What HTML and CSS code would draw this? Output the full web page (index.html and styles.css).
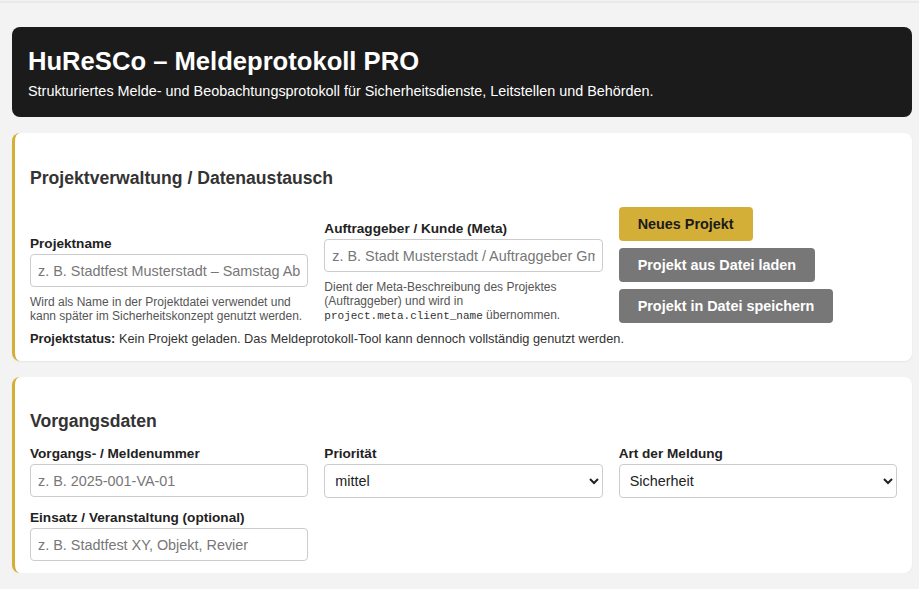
FILE: index.html
```html
<!DOCTYPE html>
<html lang="de">
<head>
<meta charset="utf-8">
<title>HuReSCo – Meldeprotokoll PRO</title>
<link rel="stylesheet" href="styles.css">
</head>
<body>
<div class="topline"></div>
<main class="page">
  <header class="app-header">
    <h1 class="app-title">HuReSCo – Meldeprotokoll PRO</h1>
    <p class="app-subtitle">Strukturiertes Melde- und Beobachtungsprotokoll für Sicherheitsdienste, Leitstellen und Behörden.</p>
  </header>

  <section class="card card-project">
    <h2 class="card-title">Projektverwaltung / Datenaustausch</h2>
    <div class="grid grid-bottom">
      <div class="field">
        <label class="label" for="pname">Projektname</label>
        <input class="input" id="pname" type="text" placeholder="z. B. Stadtfest Musterstadt – Samstag Abend">
        <p class="help">Wird als Name in der Projektdatei verwendet und kann später im Sicherheitskonzept genutzt werden.</p>
      </div>
      <div class="field">
        <label class="label" for="client">Auftraggeber / Kunde (Meta)</label>
        <input class="input" id="client" type="text" placeholder="z. B. Stadt Musterstadt / Auftraggeber GmbH">
        <p class="help">Dient der Meta-Beschreibung des Projektes (Auftraggeber) und wird in <code class="code">project.meta.client_name</code> übernommen.</p>
      </div>
      <div class="actions">
        <button class="btn btn-gold" type="button">Neues Projekt</button>
        <button class="btn btn-gray" type="button">Projekt aus Datei laden</button>
        <button class="btn btn-gray" type="button">Projekt in Datei speichern</button>
      </div>
    </div>
    <p class="status"><strong>Projektstatus:</strong> Kein Projekt geladen. Das Meldeprotokoll-Tool kann dennoch vollständig genutzt werden.</p>
  </section>

  <section class="card card-case">
    <h2 class="card-title">Vorgangsdaten</h2>
    <div class="grid grid-rows">
      <div class="field">
        <label class="label" for="num">Vorgangs- / Meldenummer</label>
        <input class="input" id="num" type="text" placeholder="z. B. 2025-001-VA-01">
      </div>
      <div class="field">
        <label class="label" for="prio">Priorität</label>
        <select class="input select" id="prio">
          <option>niedrig</option>
          <option selected>mittel</option>
          <option>hoch</option>
        </select>
      </div>
      <div class="field">
        <label class="label" for="art">Art der Meldung</label>
        <select class="input select" id="art">
          <option selected>Sicherheit</option>
          <option>Sanität</option>
          <option>Technik</option>
        </select>
      </div>
      <div class="field">
        <label class="label" for="einsatz">Einsatz / Veranstaltung (optional)</label>
        <input class="input" id="einsatz" type="text" placeholder="z. B. Stadtfest XY, Objekt, Revier">
      </div>
    </div>
  </section>
</main>
</body>
</html>
```

FILE: styles.css
```css
* { box-sizing: border-box; }

html, body {
  margin: 0;
  padding: 0;
  background: #f3f3f3;
  font-family: "Liberation Sans", Arial, sans-serif;
  color: #222;
}

.topline {
  height: 3px;
  border-top: 1px solid #f3f3f3;
  border-bottom: 2px solid #e9e9e9;
}

.page {
  width: 900px;
  margin-left: 12px;
  padding-top: 24px;
  display: flex;
  flex-direction: column;
  gap: 16px;
}

.app-header {
  background: #1b1b1b;
  color: #fff;
  border-radius: 8px;
  padding: 18px 16px 18px;
}

.app-title {
  margin: 0 0 6px;
  font-size: 25.6px;
  line-height: 32px;
  font-weight: bold;
}

.app-subtitle {
  margin: 0;
  font-size: 14.4px;
  line-height: 16px;
}

.card {
  background: #fff;
  border-radius: 8px;
  border-left: 3px solid #d4af37;
  box-shadow: 0 1px 2px rgba(0, 0, 0, 0.06);
  padding: 0 15px 12px;
}

.card-title {
  margin: 0;
  font-size: 17.6px;
  line-height: 21px;
  font-weight: bold;
  color: #333;
}

.card-project { padding-bottom: 15px; }
.card-project .card-title { padding: 35px 0 18px; }
.card-case .card-title { padding: 34px 0 14px; }

.grid {
  display: grid;
  grid-template-columns: repeat(3, 1fr);
  column-gap: 16px;
}

.grid-bottom { align-items: end; }
.grid-rows { row-gap: 12px; }

.field {
  display: flex;
  flex-direction: column;
  min-width: 0;
}

.label {
  display: block;
  font-size: 13.6px;
  line-height: 16px;
  font-weight: bold;
  color: #222;
  margin-bottom: 2px;
}

.input {
  width: 100%;
  height: 33px;
  border: 1px solid #ccc;
  border-radius: 4px;
  padding: 0 7px;
  font-family: "Liberation Sans", Arial, sans-serif;
  font-size: 14.4px;
  color: #222;
  background: #fff;
}

.input::placeholder { color: #777; }

.select {
  height: 34px;
  padding: 0 6px;
}

.help {
  margin: 8px 0 0;
  font-size: 12px;
  line-height: 14px;
  color: #555;
}

.code {
  font-family: "Liberation Mono", "Courier New", monospace;
  font-size: 11px;
  color: #333;
}

.actions {
  display: flex;
  flex-direction: column;
  align-items: flex-start;
  gap: 7px;
}

.btn {
  border: none;
  border-radius: 4px;
  font-family: "Liberation Sans", Arial, sans-serif;
  font-size: 14.4px;
  line-height: 16px;
  font-weight: bold;
  padding: 9px 19px;
  cursor: pointer;
}

.btn-gold { background: #d4af37; color: #1b1b1b; }
.btn-gray { background: #777; color: #fff; }

.status {
  margin: 8px 0 0;
  font-size: 12.8px;
  line-height: 15px;
  color: #333;
}

.status strong { color: #222; }
```
